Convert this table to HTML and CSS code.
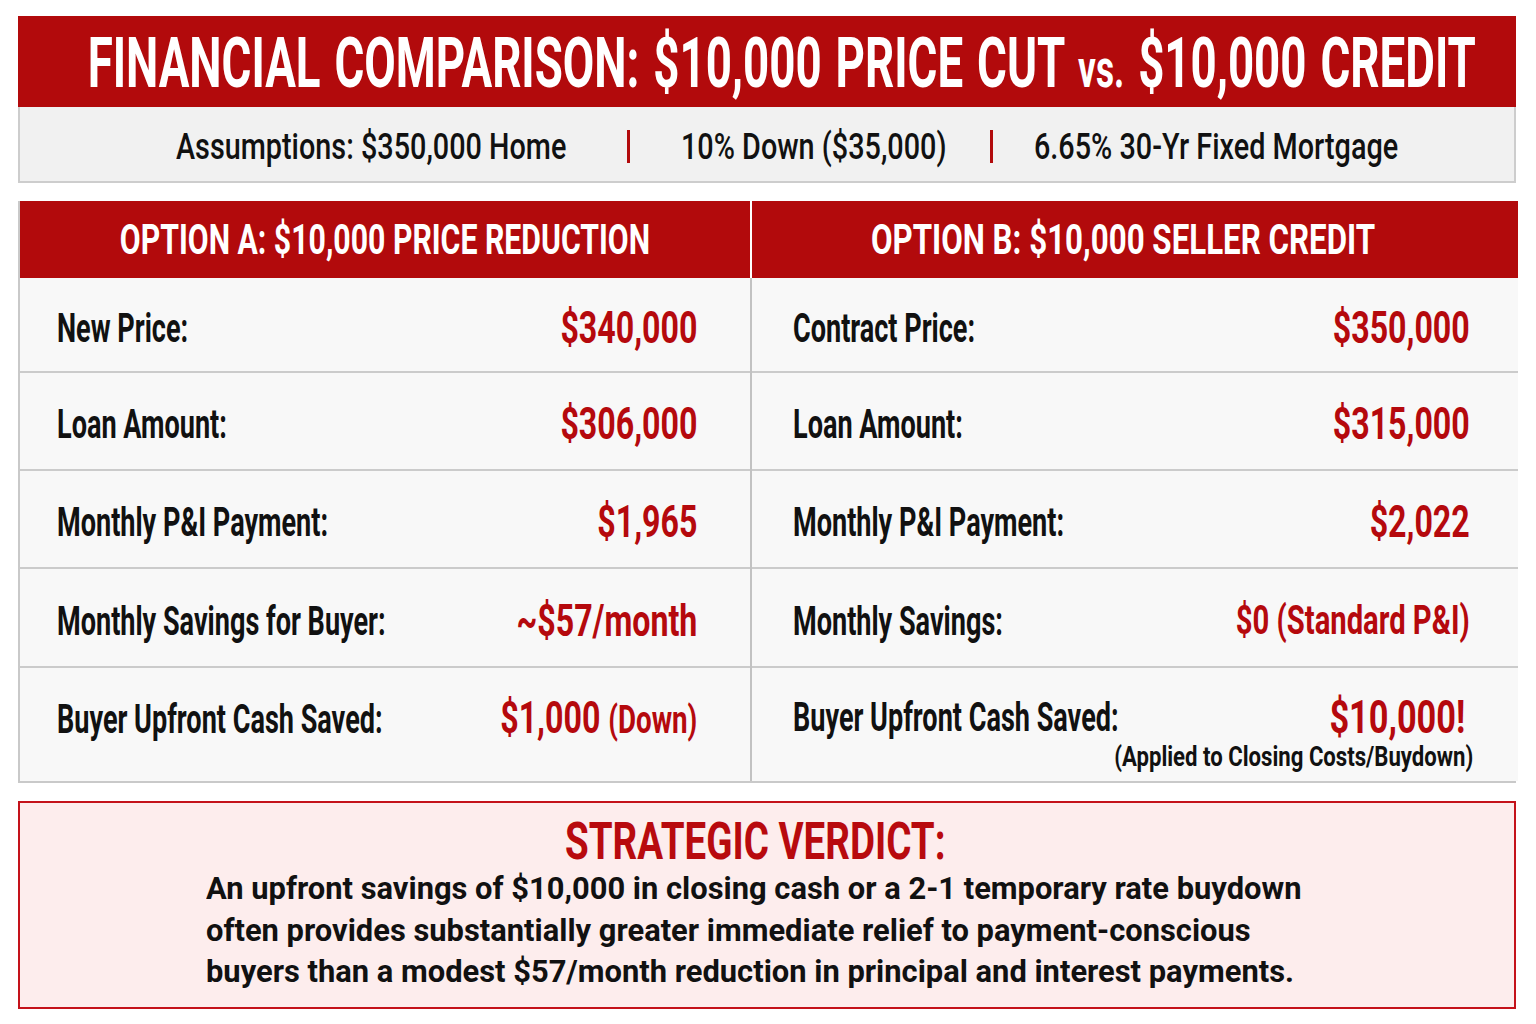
FILE: index.html
```html
<!DOCTYPE html>
<html lang="en">
<head>
<meta charset="utf-8">
<title>Financial Comparison</title>
<link rel="stylesheet" href="styles.css">
</head>
<body>
<div class="page">
  <header class="banner">
    <h1 class="fit c title">FINANCIAL COMPARISON: $10,000 PRICE CUT <span class="vs">vs.</span> $10,000 CREDIT</h1>
  </header>
  <div class="assume">
    <div class="acell"><span class="fit atext">Assumptions: $350,000 Home</span></div>
    <span class="pipe"></span>
    <div class="acell a2"><span class="fit atext">10% Down ($35,000)</span></div>
    <span class="pipe"></span>
    <div class="acell a3"><span class="fit atext">6.65% 30-Yr Fixed Mortgage</span></div>
  </div>

  <section class="table">
    <div class="col col-a">
      <div class="head"><span class="fit c htext">OPTION A: $10,000 PRICE REDUCTION</span></div>
      <div class="row r1"><div class="cell"><span class="fit label">New Price:</span></div><div class="cell"><span class="fit r val">$340,000</span></div></div>
      <div class="row r2"><div class="cell"><span class="fit label">Loan Amount:</span></div><div class="cell"><span class="fit r val">$306,000</span></div></div>
      <div class="row r3"><div class="cell"><span class="fit label">Monthly P&amp;I Payment:</span></div><div class="cell"><span class="fit r val">$1,965</span></div></div>
      <div class="row r4"><div class="cell"><span class="fit label">Monthly Savings for Buyer:</span></div><div class="cell"><span class="fit r val">~$57/month</span></div></div>
      <div class="row r5 r5a"><div class="cell"><span class="fit label">Buyer Upfront Cash Saved:</span></div><div class="cell"><span class="fit r val">$1,000 <span class="small">(Down)</span></span></div></div>
    </div>
    <div class="col col-b">
      <div class="head"><span class="fit c htext">OPTION B: $10,000 SELLER CREDIT</span></div>
      <div class="row r1"><div class="cell"><span class="fit label">Contract Price:</span></div><div class="cell"><span class="fit r val">$350,000</span></div></div>
      <div class="row r2"><div class="cell"><span class="fit label">Loan Amount:</span></div><div class="cell"><span class="fit r val">$315,000</span></div></div>
      <div class="row r3"><div class="cell"><span class="fit label">Monthly P&amp;I Payment:</span></div><div class="cell"><span class="fit r val">$2,022</span></div></div>
      <div class="row r4"><div class="cell"><span class="fit label">Monthly Savings:</span></div><div class="cell"><span class="fit r val mid">$0 (Standard P&amp;I)</span></div></div>
      <div class="row r5 r5b">
        <div class="cell"><span class="fit label">Buyer Upfront Cash Saved:</span></div>
        <div class="cell vcell"><span class="fit r val big">$10,000!</span></div>
        <div class="note"><span class="fit r ntext">(Applied to Closing Costs/Buydown)</span></div>
      </div>
    </div>
  </section>

  <section class="verdict">
    <div class="vhead"><h2 class="fit c vtitle">STRATEGIC VERDICT:</h2></div>
    <p class="fit vtext">An upfront savings of $10,000 in closing cash or a 2-1 temporary rate buydown<br>often provides substantially greater immediate relief to payment-conscious<br>buyers than a modest $57/month reduction in principal and interest payments.</p>
  </section>
</div>
</body>
</html>
```
FILE: styles.css
```css
* { box-sizing: border-box; }
html, body { margin: 0; padding: 0; background: #ffffff; overflow: hidden; }
body {
  font-family: Roboto, "Liberation Sans", "DejaVu Sans", sans-serif;
  color: #111;
}
.page {
  width: 1536px;
  height: 1024px;
  padding: 16px 20px 0 18px;
}

/* condensed text helper: draws the text horizontally narrowed */
.fit {
  display: block;
  flex: none;
  margin: 0;
  white-space: nowrap;
  width: calc(100% / var(--s));
  transform: scaleX(var(--s));
  transform-origin: 0 50%;
}
.fit.r {
  text-align: right;
  margin-left: calc(100% - 100% / var(--s));
  transform-origin: 100% 50%;
}
.fit.c {
  text-align: center;
  margin-left: calc((100% - 100% / var(--s)) / 2);
  transform-origin: 50% 50%;
}

/* banner */
.banner {
  height: 91px;
  background: #b20a0c;
  display: grid;
  grid-template-columns: minmax(0, 1fr);
  align-content: center;
  padding-left: 30px;
  padding-top: 9px;
}
.title {
  --s: 0.652;
  color: #fff;
  font-size: 70px;
  font-weight: 700;
  line-height: 80px;
  word-spacing: 4px;
}
.vs { font-size: 54px; }

/* assumptions */
.assume {
  height: 76px;
  background: #f1f1f1;
  border: 2px solid #cdcdcd;
  border-top: 0;
  display: grid;
  grid-template-columns: 451px 3px 360px 3px minmax(0, 1fr);
  align-items: center;
  padding-left: 156px;
  padding-top: 6px;
}
.acell { min-width: 0; }
.a2 { padding-left: 51px; }
.a3 { padding-left: 41px; }
.atext {
  --s: 0.8;
  font-size: 36px;
  font-weight: 500;
  line-height: 44px;
  color: #111;
}
.pipe {
  display: block;
  width: 3px;
  height: 33px;
  background: #b20a0c;
  margin-top: -2px;
}

/* table */
.table {
  margin-top: 18px;
  display: grid;
  grid-template-columns: 732px 766px;
  border: 2px solid #c9c9c9;
  border-top: 0;
  height: 582px;
}
.col { display: flex; flex-direction: column; min-width: 0; }
.col-a { border-right: 2px solid #c2c2c2; }
.head {
  height: 77px;
  background: #b20a0c;
  display: grid;
  grid-template-columns: minmax(0, 1fr);
  align-content: center;
}
.col-a .head { margin-right: -2px; border-right: 2px solid #ffffff; }
.col-b .head { padding-right: 24px; }
.htext {
  --s: 0.72;
  color: #fff;
  font-size: 42px;
  font-weight: 700;
  line-height: 50px;
}
.col-b .htext { --s: 0.745; }
.row {
  display: grid;
  grid-template-columns: minmax(0, 1fr) minmax(0, 1fr);
  align-items: center;
  background: #f8f8f8;
  border-bottom: 2px solid #cbcbcb;
  padding-top: 6px;
}
.cell { min-width: 0; }
.col-a .row { padding-left: 37px; padding-right: 53px; }
.col-b .row { padding-left: 41px; padding-right: 48px; }
.r1 { height: 95px; }
.r2 { height: 98px; }
.r3 { height: 98px; }
.r4 { height: 99px; }
.r5 { flex: 1; border-bottom: 0; padding-top: 0; padding-bottom: 12px; }
.label {
  --s: 0.66;
  font-size: 41px;
  font-weight: 700;
  line-height: 50px;
  color: #111;
}
.val {
  --s: 0.73;
  font-size: 44px;
  font-weight: 700;
  line-height: 50px;
  color: #b5090d;
}
.val.mid { font-size: 40px; }
.val.big { font-size: 47px; }
.small { font-size: 38px; }

.r5b {
  grid-template-rows: auto auto;
  align-content: start;
  padding-top: 24px;
  padding-bottom: 0;
}
.col-b .r5b { padding-right: 53px; }
.note {
  grid-column: 1 / 3;
  margin-right: -8px;
  margin-top: 0;
}
.ntext {
  --s: 0.82;
  font-size: 27px;
  font-weight: 700;
  line-height: 30px;
  color: #111;
}

/* verdict */
.verdict {
  margin-top: 18px;
  height: 208px;
  border: 2px solid #c4121a;
  background: #fdeded;
  padding: 10px 0 0 186px;
}
.vhead { margin-left: -186px; padding-right: 24px; }
.vtitle {
  --s: 0.74;
  color: #b80a0e;
  font-size: 52px;
  font-weight: 700;
  line-height: 58px;
}
.vtext {
  --s: 0.965;
  margin-top: -3px;
  font-size: 32px;
  font-weight: 700;
  line-height: 41.5px;
  color: #111;
}
```
